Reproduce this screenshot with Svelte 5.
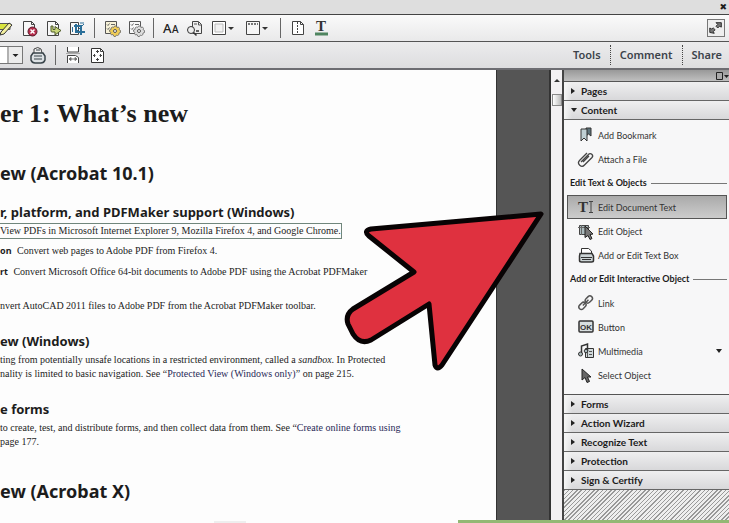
<script>
  const editTools = ['highlight', 'remove', 'export', 'crop', '|', 'action', 'settings', '|', 'font', 'find', 'frame', 'header', '|', 'split', 'text'];
  const viewTools = ['print', '|', 'fit', 'full'];

  const labels = {
    highlight: 'Highlight text', remove: 'Delete page', export: 'Export page', crop: 'Crop pages',
    action: 'Create action', settings: 'Page settings', font: 'Font', find: 'Find', frame: 'Background',
    header: 'Header and footer', split: 'Split document', text: 'Text colour',
    print: 'Print', fit: 'Fit width', full: 'Fit page'
  };

  const groups = [
    { items: [{ icon: 'bookmark', label: 'Add Bookmark' }, { icon: 'clip', label: 'Attach a File' }] },
    {
      title: 'Edit Text & Objects',
      items: [
        { icon: 'type', label: 'Edit Document Text' },
        { icon: 'object', label: 'Edit Object' },
        { icon: 'textbox', label: 'Add or Edit Text Box' }
      ]
    },
    {
      title: 'Add or Edit Interactive Object',
      items: [
        { icon: 'link', label: 'Link' },
        { icon: 'ok', label: 'Button' },
        { icon: 'media', label: 'Multimedia', menu: true },
        { icon: 'pointer', label: 'Select Object' }
      ]
    }
  ];

  const sections = ['Pages', 'Content', 'Forms', 'Action Wizard', 'Recognize Text', 'Protection', 'Sign & Certify'];

  let open = $state('Content');
  let selected = $state('Edit Document Text');

  function toggle(name) {
    open = open === name ? null : name;
  }
</script>

{#snippet page()}
  <path d="M3.5 2.5h8l3 3v11h-11z" fill="#f8f8f8" stroke="#444" />
  <path d="M11.5 2.5v3h3" fill="none" stroke="#444" />
{/snippet}

{#snippet cog(fill)}
  <path d="M11.500 7h2l.5 1.500 1.500-.5 1 1.500-.5 1 1.500 1v2l-1.500.5v1.500l-1.500 1-1-.5-1 1.500h-1.500L10 15.500l-1.500.5-1-1.500.5-1-1.500-1v-1.500L8 10.500 8 9l1.500-1 1 .5z" {fill} stroke="#666" stroke-width=".8" />
  <circle cx="12" cy="12" r="1.500" fill="#fff" stroke="#555" />
{/snippet}

{#snippet glyph(name)}
  <svg class="glyph" class:wide={name === 'frame' || name === 'header'} viewBox={name === 'frame' || name === 'header' ? '0 0 28 18' : '0 0 18 18'} aria-hidden="true">
    {#if name === 'highlight'}
      <path d="M0 4.500h14v6H0z" fill="#d8e43c" stroke="#555" />
      <path d="M5 13l8-9 3 2-8 9-4 1z" fill="#f3f0a0" stroke="#333" />
    {:else if name === 'remove'}
      {@render page()}
      <circle cx="12.500" cy="12.500" r="4.500" fill="#b62d4c" stroke="#5d1e2e" />
      <path d="M10.500 10.500l4 4m0-4l-4 4" stroke="#fff" stroke-width="1.500" />
    {:else if name === 'export'}
      {@render page()}
      <path d="M7 7v5q0 1 1 1h3v3l6-4.500-6-4v3H9V7z" fill="#c9d77b" stroke="#4d5928" />
    {:else if name === 'crop'}
      <path d="M2.500 3.500h8v12h-8z" fill="#f8f8f8" stroke="#444" />
      <path d="M6 7h7v9M8 5v8h9" fill="none" stroke="#2b6f99" stroke-width="2" />
      <path d="M8 13l8-8M12 4h4M4.500 8v5" stroke="#2b6f99" />
    {:else if name === 'action' || name === 'settings'}
      <path d="M2.500 2.500h11v12h-11z" fill={name === 'action' ? '#f7f2d8' : '#f8f8f8'} stroke="#555" />
      <path d="M4 5.500l1 1 1.500-2M8 5.500h4M4 9.500l1 1 1.500-2" fill="none" stroke="#666" />
      {@render cog(name === 'action' ? '#f0cd58' : '#ddd')}
    {:else if name === 'font'}
      <text x="1" y="14" class="letters">A</text>
      <text x="10" y="14" class="letters small">A</text>
    {:else if name === 'find'}
      <path d="M6.500 2.500h6l3 3v9h-9z" fill="#eee" stroke="#444" />
      <path d="M12.500 3v3h3M8 5h3" fill="none" stroke="#555" />
      <circle cx="5" cy="11" r="3.500" fill="#eee" stroke="#333" />
      <path d="M7.500 13.500l3 3M10 12h3" stroke="#333" stroke-width="1.500" />
    {:else if name === 'frame'}
      <path d="M2.500 2.500h13v13h-13z" fill="#fff" stroke="#444" />
      <path d="M5 5h8v8H5z" fill="#f2f2f2" stroke="#bbb" />
      <path d="M18 8h6l-3 3z" fill="#333" />
    {:else if name === 'header'}
      <path d="M2.500 2.500h13v13h-13z" fill="#f6f6f6" stroke="#444" />
      <path d="M4 5h10" stroke="#777" stroke-width="2" stroke-dasharray="2 1" />
      <path d="M18 8h6l-3 3z" fill="#333" />
    {:else if name === 'split'}
      <path d="M3.500 2.500h8l3 3v10h-11z" fill="#fff" stroke="#444" />
      <path d="M11.500 2.500v3h3" fill="none" stroke="#444" />
      <path d="M8.500 3v12" stroke="#444" stroke-dasharray="2 1" />
    {:else if name === 'text'}
      <text x="3" y="12" class="serif">T</text>
      <path d="M2 13.500h13v3H2z" fill="#4f8560" />
    {:else if name === 'print'}
      <path d="M5 7V3q4-3 7 0l1 4" fill="#eee" stroke="#444" />
      <path d="M4 7h10l2 3v4q-1 3-4 3H6q-3 0-4-3v-4z" fill="#dce1e4" stroke="#39444a" stroke-width="1.500" />
      <path d="M5 10h8M5 13h8M7 4h4" stroke="#39444a" />
    {:else if name === 'fit'}
      <path d="M3.500 1v5h11V1" fill="#fff" stroke="#444" />
      <path d="M3.500 17V9.500h8l3 2V17" fill="#fff" stroke="#444" />
      <path d="M2 7.500h14" stroke="#aaa" />
      <path d="M5 13l2-1.500v3zM13 13l-2-1.500v3zM6 13h6" fill="#333" stroke="#777" />
    {:else if name === 'full'}
      <path d="M3.500 2.500h9l3 3v11h-12z" fill="#fff" stroke="#333" />
      <path d="M12.500 2.500v3h3M9.500 4v3M8 5.500h3M9.500 15v-3M8 13.500h3M5 9.500h2.500M6.500 8v3M14 9.500h-2.500M12.500 8v3" fill="none" stroke="#444" />
    {:else if name === 'bookmark'}
      <path d="M9 2h5v8l-2.500-2L9 10z" fill="#5e747c" stroke="#333" />
      <path d="M4 3h6v12l-3-3-3 3z" fill="#c0d0d4" stroke="#333" />
    {:else if name === 'clip'}
      <path d="M4 12L11.500 4.500a2.300 2.300 0 0 1 3.500 3L7.500 15a3.300 3.300 0 0 1-5-4.500L10 3M6 12l6-6" fill="none" stroke="#444" stroke-width="1.300" />
    {:else if name === 'type'}
      <text x="1" y="14" class="serif">T</text>
      <path d="M12 3.500h4M14 3v12M12 14.500h4" stroke="#444" />
    {:else if name === 'object'}
      <path d="M2.500 3.500h9v9h-9z" fill="#a9b9bc" stroke="#444" />
      <path d="M4.500 3v10M1 5.500h12" stroke="#666" />
      <path d="M8 4l8 8-3 .5 2 4-2 1-2-4-3 2z" fill="#777" stroke="#222" />
    {:else if name === 'textbox'}
      <path d="M4.500 8V2.500h7L14.500 5v3" fill="#fff" stroke="#333" />
      <path d="M3 7.500h12l1.500 2.500v4.500q0 1.500-2 1.500h-10q-2 0-2-1.500V10z" fill="#ccd4d6" stroke="#333" stroke-width="1.500" />
      <path d="M4 11.500h11M5 13.500h9" stroke="#333" />
    {:else if name === 'link'}
      <g transform="rotate(-45 9 9)" fill="none" stroke="#555">
        <rect x="0.500" y="6" width="8" height="5" rx="2.500" stroke-width="1.500" />
        <rect x="9.500" y="6" width="8" height="5" rx="2.500" stroke-width="1.500" />
        <path d="M5 8.500h8" stroke-width="1.500" />
      </g>
    {:else if name === 'ok'}
      <rect x="2" y="3" width="14" height="11" rx="1" fill="#d9dfe0" stroke="#333" stroke-width="1.500" />
      <text x="3" y="12" class="ok">OK</text>
    {:else if name === 'media'}
      <path d="M8.500 6.500h8v9h-8z" fill="#d1dadc" stroke="#333" />
      <path d="M10.500 7v8M12 9.500h3M12 12.500h3" stroke="#555" />
      <path d="M4.500 12V4l6-2v7" fill="none" stroke="#333" stroke-width="1.500" />
      <circle cx="3.500" cy="12" r="2" fill="#a9b9bc" stroke="#333" />
      <circle cx="9" cy="9" r="1.800" fill="#a9b9bc" stroke="#333" />
    {:else if name === 'pointer'}
      <path d="M5 3v11l3-2.500 2 5 2.500-1-2-4.500H14z" fill="#666" stroke="#222" />
    {/if}
  </svg>
{/snippet}

{#snippet toolList(tools)}
  {#each tools as tool}
    {#if tool === '|'}
      <span class="divider"></span>
    {:else}
      <button class="tool" aria-label={labels[tool]}>{@render glyph(tool)}</button>
    {/if}
  {/each}
{/snippet}

<div class="window">
  <div class="titlebar"><button aria-label="Close">✖</button></div>

  <div class="toolbar edit-bar">
    {@render toolList(editTools)}
    <button class="expand" aria-label="Reading mode">
      <svg viewBox="0 0 18 18" aria-hidden="true">
        <path d="M9 3h6v5l-2-1-2 2-2-2 2-2zM2 14V9l2 1 2-1 2 2-2 2 1 2z" fill="#777" stroke="#222" />
      </svg>
    </button>
  </div>

  <div class="toolbar view-bar">
    <div class="zoom">
      <select aria-label="Zoom"><option></option></select>
      <svg viewBox="0 0 14 16" aria-hidden="true"><path d="M.5 0v16" stroke="#777" /><path d="M5 7h6l-3 3z" fill="#222" /></svg>
    </div>
    {@render toolList(viewTools)}
    <div class="modes">
      <button>Tools</button>
      <button>Comment</button>
      <button>Share</button>
    </div>
  </div>

  <div class="workspace">
    <main>
      <article>
        <h1>er 1: What’s new</h1>
        <h2>ew (Acrobat 10.1)</h2>
        <h3>r, platform, and PDFMaker support (Windows)</h3>
        <p class="boxed">View PDFs in Microsoft Internet Explorer 9, Mozilla Firefox 4, and Google Chrome.</p>
        <p class="web"><b>on</b> Convert web pages to Adobe PDF from Firefox 4.</p>
        <p class="office"><b>rt</b> Convert Microsoft Office 64-bit documents to Adobe PDF using the Acrobat PDFMaker</p>
        <p class="cad">nvert AutoCAD 2011 files to Adobe PDF from the Acrobat PDFMaker toolbar.</p>
        <h3 class="next">ew (Windows)</h3>
        <p>ting from potentially unsafe locations in a restricted environment, called a <i>sandbox</i>. In Protected<br />
          nality is limited to basic navigation. See “<a href="#protected">Protected View (Windows only)</a>” on page 215.</p>
        <h3 class="next">e forms</h3>
        <p>to create, test, and distribute forms, and then collect data from them. See “<a href="#forms">Create online forms using</a><br />
          page 177.</p>
        <h2 class="last">ew (Acrobat X)</h2>
      </article>
      <div class="scrollbar"><span class="up"></span><span class="thumb"></span></div>
      <svg class="arrow" viewBox="0 0 202 162" aria-hidden="true">
        <path d="M198 5L28 20Q20 22 26 27L71 63 10 100Q2 106 5 115L10 125Q17 136 28 131L86 95 92 156Q94 162 99 156Z" />
      </svg>
    </main>

    <aside>
      <div class="options">
        <button aria-label="Panel options">
          <svg viewBox="0 0 14 10" aria-hidden="true"><path d="M1.500 1.500h6v7h-6z" fill="#aaa" stroke="#222" /><path d="M9 4h5l-2.500 3z" fill="#222" /></svg>
        </button>
      </div>
      {#each sections as name (name)}
        <button class="section" aria-expanded={open === name} onclick={() => toggle(name)}>
          <span class="marker" class:open={open === name}></span>{name}
        </button>
        {#if name === 'Content' && open === name}
          <div class="content">
            {#each groups as group}
              {#if group.title}<h4>{group.title}</h4>{/if}
              {#each group.items as item (item.label)}
                <button class="item" class:selected={selected === item.label} onclick={() => (selected = item.label)}>
                  {@render glyph(item.icon)}
                  <span>{item.label}</span>
                  {#if item.menu}<i class="caret"></i>{/if}
                </button>
              {/each}
            {/each}
          </div>
        {/if}
      {/each}
      <div class="hatch"></div>
    </aside>
  </div>
  <div class="tab-shade"></div>
  <div class="progress"></div>
</div>

<style>
  :global(body) {
    margin: 0;
  }

  .window {
    position: relative;
    display: flex;
    flex-direction: column;
    height: 100vh;
    overflow: hidden;
    background: #fdfdfd;
    color: #1c1c1c;
    font-family: 'Noto Sans', sans-serif;
  }

  button {
    padding: 0;
    border: 0;
    background: none;
    color: inherit;
    font: inherit;
    cursor: pointer;
  }

  svg {
    display: block;
  }

  .titlebar {
    display: flex;
    justify-content: flex-end;
    height: 14px;
    padding-right: 2px;
    border-bottom: 1px solid #444;
    background: #dedede;
    font: 9px/14px 'DejaVu Sans', sans-serif;
  }

  .toolbar {
    display: flex;
    align-items: center;
    gap: 6px;
    box-sizing: border-box;
    flex: none;
    height: 27px;
    border-bottom: 1px solid #555;
    background: linear-gradient(#fafafa, #e9e9ea);
  }

  .edit-bar .tool:first-child {
    margin-left: -4px;
  }

  .view-bar {
    height: 28px;
    border-bottom: 2px solid #6d6d72;
    background: linear-gradient(#ececed, #dddddf);
  }

  .glyph {
    width: 18px;
    height: 18px;
  }

  .glyph.wide {
    width: 28px;
  }

  .divider {
    width: 1px;
    height: 20px;
    margin: 0 2px;
    background: #666;
  }

  .letters {
    font: 500 13px 'Noto Sans', sans-serif;
    fill: #222;
  }

  .letters.small {
    font-size: 10px;
  }

  .serif {
    font: bold 15px 'Liberation Serif', serif;
    fill: #333;
  }

  .ok {
    font: bold 8px 'Liberation Sans', sans-serif;
    fill: #333;
  }

  .expand {
    width: 18px;
    height: 18px;
    margin: 0 4px 0 auto;
    border: 1px solid #777;
    background: #eee;
  }

  .zoom {
    display: grid;
    box-sizing: border-box;
    width: 23px;
    height: 18px;
    border: 1px solid #777;
    border-left: 0;
    background: #fff;
  }

  .zoom select {
    grid-area: 1 / 1;
    width: 100%;
    border: 0;
    background: none;
    appearance: none;
  }

  .zoom svg {
    grid-area: 1 / 1;
    justify-self: end;
    width: 15px;
    height: 16px;
    background: #ececec;
    pointer-events: none;
  }

  .modes {
    display: flex;
    align-items: center;
    margin-left: auto;
    color: #3c434b;
    font-size: 11px;
    font-weight: 600;
    line-height: 20px;
  }

  .modes button {
    padding: 0 9px;
  }

  .modes button + button {
    border-left: 1px dotted #444;
  }

  .modes button:last-child {
    padding-right: 7px;
  }

  .workspace {
    display: flex;
    flex: 1;
    min-height: 0;
  }

  main {
    position: relative;
    display: flex;
    flex: 1;
    min-width: 0;
    background: #555;
  }

  article {
    flex: 1;
    min-width: 0;
    margin-right: 52px;
    padding-top: 28px;
    overflow: hidden;
    border-right: 1px solid #333;
    background: #fdfdfd;
    white-space: nowrap;
  }

  h1, h2, h3, h4, p {
    margin: 0;
  }

  h1 {
    font: bold 26px/32px 'Liberation Serif', serif;
  }

  h2 {
    margin-top: 31px;
    font-size: 18px;
    line-height: 24px;
  }

  h3 {
    margin-top: 18px;
    font-size: 13px;
    line-height: 18px;
  }

  p {
    margin-top: 3px;
    font: 10px/14px 'Liberation Serif', serif;
  }

  p b {
    margin-right: 3px;
    font: bold 9px/14px 'Noto Sans', sans-serif;
  }

  p a {
    color: #292957;
    text-decoration: none;
  }

  .boxed {
    width: max-content;
    margin-top: 2px;
    border: 1px solid #70867c;
    border-left: 0;
  }

  .web {
    margin-top: 5px;
  }

  .office {
    margin-top: 7px;
  }

  .cad {
    margin-top: 20px;
  }

  .next {
    margin-top: 19px;
  }

  .last {
    margin-top: 30px;
  }

  .scrollbar {
    display: flex;
    flex-direction: column;
    align-items: center;
    box-sizing: border-box;
    width: 13px;
    padding-top: 9px;
    border-left: 2px solid #333;
    background: #f3f1f3;
  }

  .up {
    border: 3px solid transparent;
    border-top: 0;
    border-bottom: 3px solid #333;
  }

  .thumb {
    width: 8px;
    height: 10px;
    margin-top: 12px;
    border: 1px solid #888;
    background: linear-gradient(90deg, #fff, #bbb);
  }

  .arrow {
    position: absolute;
    top: 139px;
    right: 17px;
    width: 202px;
    height: 162px;
  }

  .arrow path {
    fill: #df313f;
    stroke: #080304;
    stroke-width: 5px;
    stroke-linejoin: round;
  }

  aside {
    display: flex;
    flex-direction: column;
    box-sizing: border-box;
    width: 167px;
    border-left: 2px solid #444;
    background: #f7f7f8;
    font-family: Lato, sans-serif;
  }

  .options {
    display: flex;
    justify-content: flex-end;
    flex: none;
    height: 11px;
    border-bottom: 1px solid #555;
    background: linear-gradient(#999, #bfbfbf);
  }

  .options svg {
    width: 14px;
    height: 10px;
  }

  .section {
    display: flex;
    align-items: center;
    box-sizing: border-box;
    flex: none;
    height: 19px;
    padding-left: 7px;
    border-bottom: 1px solid #666;
    background: linear-gradient(90deg, #f6f6f6, transparent 8px), linear-gradient(#efeff0, #d8d8da);
    font-size: 10px;
    font-weight: bold;
  }

  .marker {
    width: 10px;
  }

  .marker::before {
    display: block;
    width: 0;
    border: 3px solid transparent;
    border-right: 0;
    border-left: 4px solid #222;
    content: '';
  }

  .marker.open::before {
    border: 3px solid transparent;
    border-top: 4px solid #222;
    border-bottom: 0;
  }

  .content {
    padding: 3px 2px 7px 3px;
    border-bottom: 1px solid #555;
  }

  .item {
    display: flex;
    align-items: center;
    gap: 3px;
    box-sizing: border-box;
    width: 100%;
    height: 24px;
    padding: 0 4px 0 9px;
    border: 1px solid transparent;
    color: #333;
    font-size: 9px;
  }

  .item.selected {
    border-color: #555;
    background: linear-gradient(#aaa, #ccc);
  }

  .caret {
    margin-left: auto;
    border: 3px solid transparent;
    border-top: 4px solid #222;
    border-bottom: 0;
  }

  h4 {
    display: flex;
    align-items: center;
    gap: 4px;
    padding-left: 3px;
    font-size: 9px;
    font-weight: bold;
    line-height: 24px;
  }

  h4::after {
    flex: 1;
    height: 1px;
    background: #777;
    content: '';
  }

  .hatch {
    flex: 1;
    background: repeating-linear-gradient(135deg, #999 0 1px, #eee 1px 3px);
  }

  /* strips laid over the bottom edge of the window */
  .tab-shade,
  .progress {
    position: absolute;
    bottom: 0;
  }

  .tab-shade {
    left: 214px;
    width: 32px;
    height: 2px;
    background: #eee;
  }

  .progress {
    right: 0;
    width: 271px;
    height: 3px;
    background: #93b874;
  }
</style>
